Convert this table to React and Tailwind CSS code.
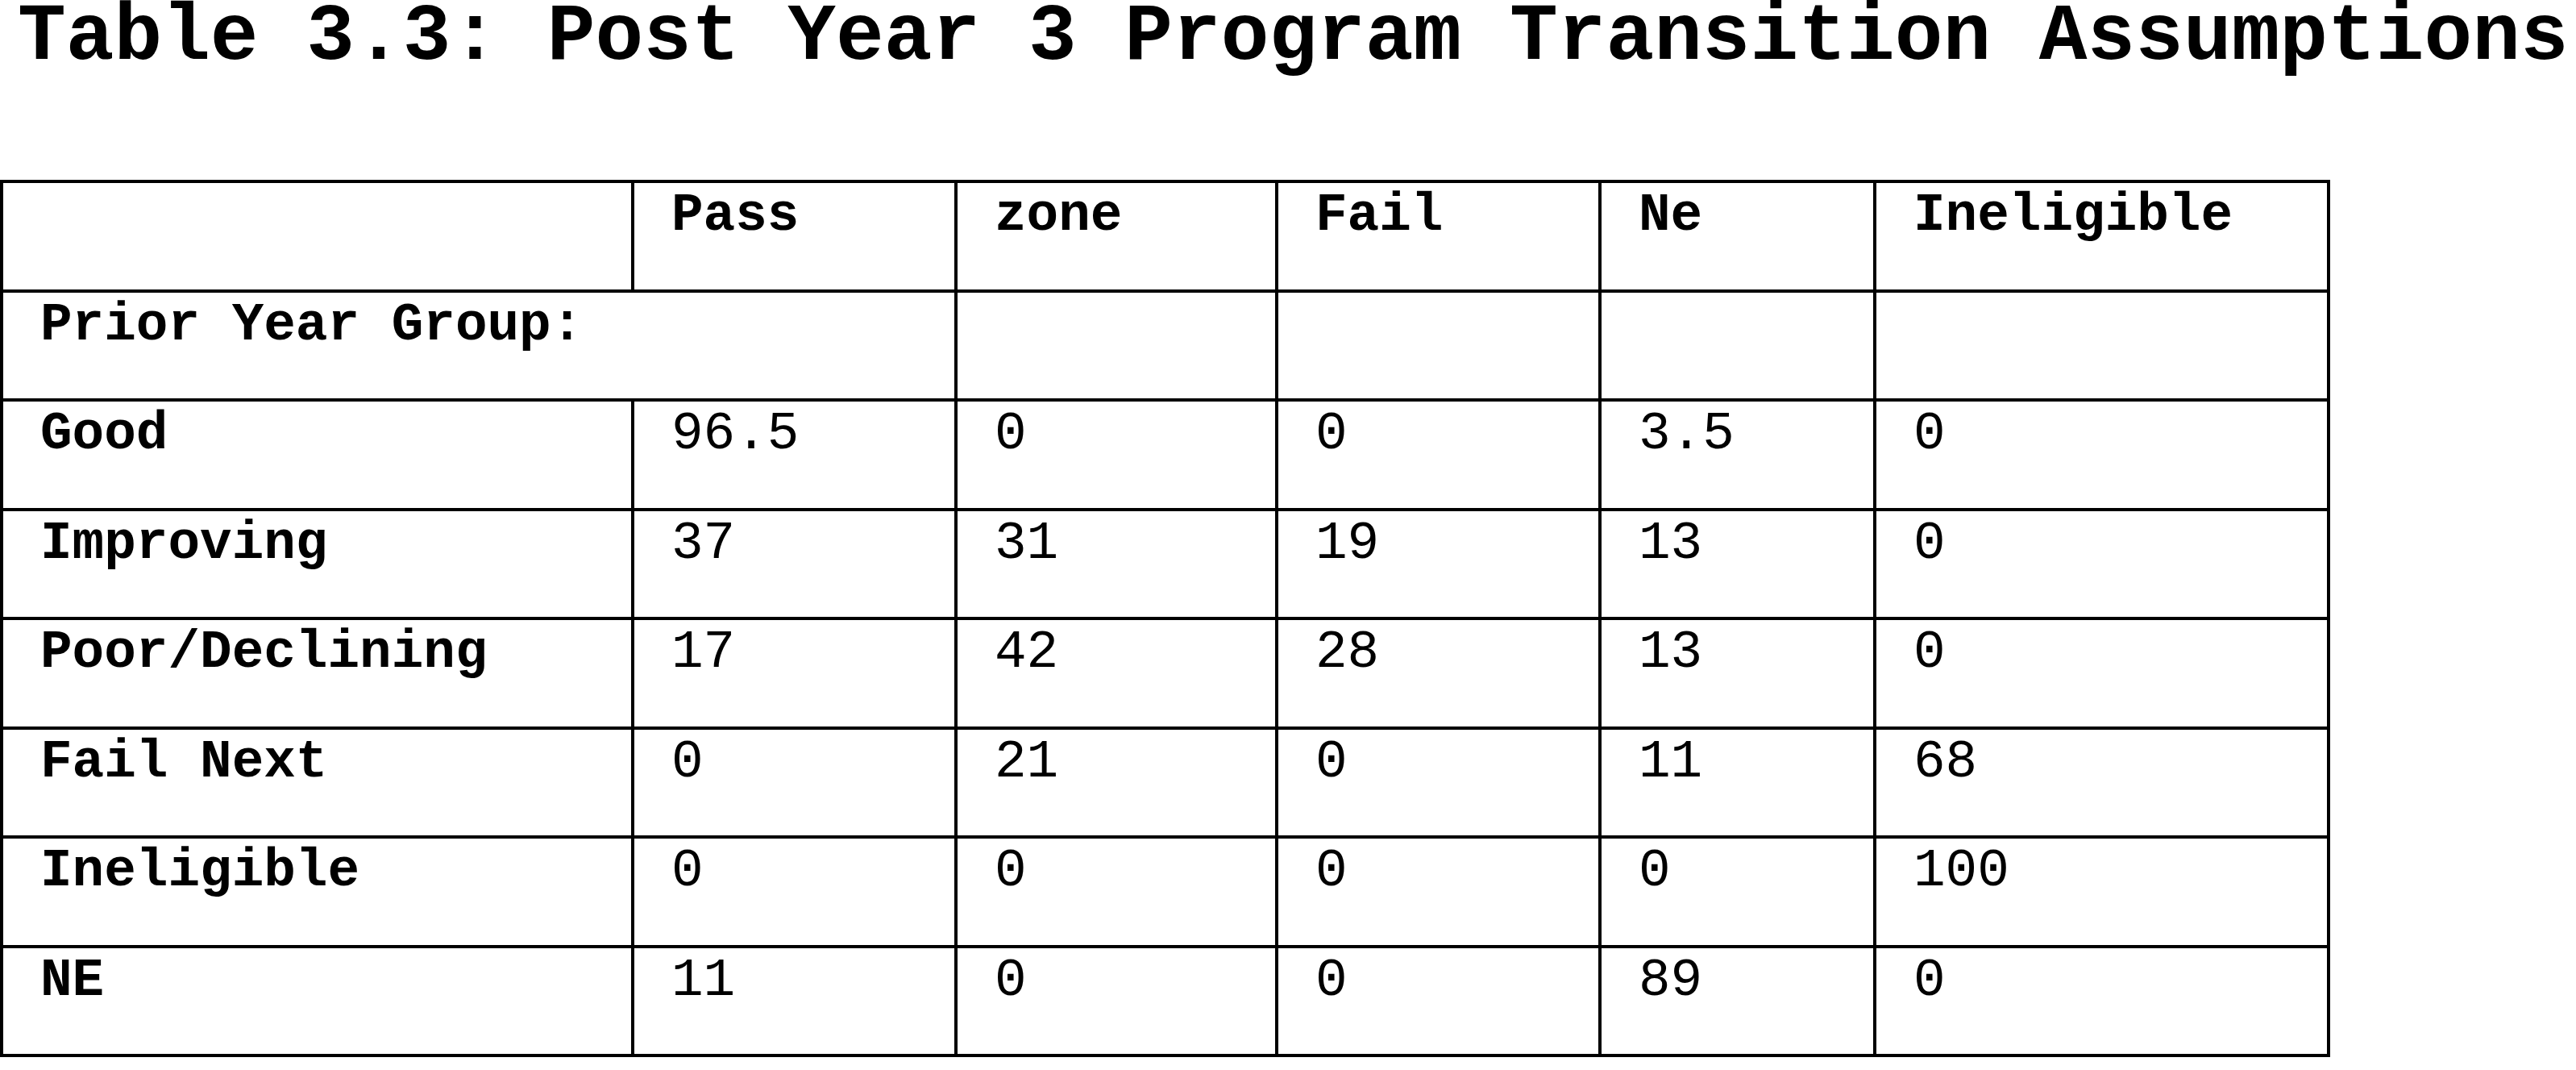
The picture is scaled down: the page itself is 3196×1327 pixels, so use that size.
const HEAD = ["", "Pass", "zone", "Fail", "Ne", "Ineligible"];

const ROWS = [
  ["Good", "96.5", "0", "0", "3.5", "0"],
  ["Improving", "37", "31", "19", "13", "0"],
  ["Poor/Declining", "17", "42", "28", "13", "0"],
  ["Fail Next", "0", "21", "0", "11", "68"],
  ["Ineligible", "0", "0", "0", "0", "100"],
  ["NE", "11", "0", "0", "89", "0"],
];

const cell = "bg-white h-[131.5px] pl-[46px] pt-[8px] text-[66px] leading-none whitespace-nowrap";

export default function App() {
  return (
    <div className="w-[3196px] h-[1327px] overflow-hidden bg-white text-black font-['Liberation_Mono',monospace]">
      {/* Title */}
      <div className="pl-[22px] -mt-[3px] text-[99.5px] leading-none font-bold whitespace-nowrap">
        Table 3.3: Post Year 3 Program Transition Assumptions
      </div>

      {/* Table */}
      <div className="mt-[126.5px] w-fit grid grid-cols-[779px_397px_394px_397px_337px_559px] gap-[4px] p-[4px] bg-black">
        {HEAD.map((h, i) => (
          <div key={i} className={`${cell} font-bold`}>{h}</div>
        ))}

        <div className={`${cell} col-span-2 font-bold`}>Prior Year Group:</div>
        <div className={cell} />
        <div className={cell} />
        <div className={cell} />
        <div className={cell} />

        {ROWS.map(row =>
          row.map((v, i) => (
            <div key={row[0] + i} className={`${cell} ${i === 0 ? "font-bold" : ""}`}>{v}</div>
          ))
        )}
      </div>
    </div>
  );
}
